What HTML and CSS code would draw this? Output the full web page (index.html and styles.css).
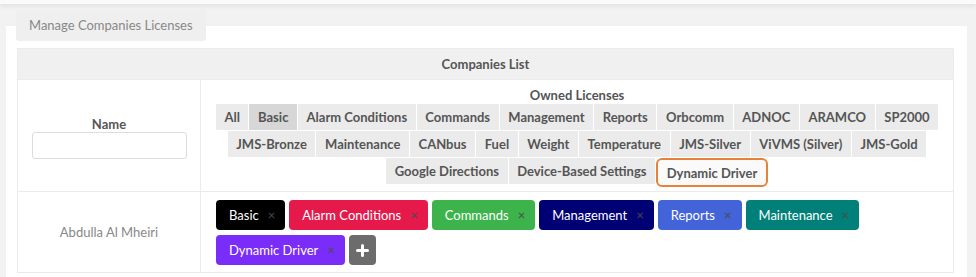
FILE: index.html
```html
<!DOCTYPE html>
<html lang="en">
<head>
    <meta charset="UTF-8">
    <meta name="viewport" content="width=device-width, initial-scale=1.0">
    <title>Manage Companies Licenses</title>
    <link rel="stylesheet" href="styles.css">
</head>
<body>
  <div class="top_bar"></div>
  <fieldset class="panel">
    <legend class="panel_title">Manage Companies Licenses</legend>
    <table class="companies">
      <colgroup>
        <col class="col_name">
        <col>
      </colgroup>
      <thead>
        <tr>
          <th colspan="2" class="list_head">Companies List</th>
        </tr>
      </thead>
      <tbody>
        <tr class="filter_row">
          <td class="name_cell">
            <div class="label">Name</div>
            <input type="text" class="name_input">
          </td>
          <td class="licenses_cell">
            <div class="label">Owned Licenses</div>
            <div class="tabs">
              <a class="tab">All</a>
              <a class="tab active">Basic</a>
              <a class="tab">Alarm Conditions</a>
              <a class="tab">Commands</a>
              <a class="tab">Management</a>
              <a class="tab">Reports</a>
              <a class="tab">Orbcomm</a>
              <a class="tab">ADNOC</a>
              <a class="tab">ARAMCO</a>
              <a class="tab">SP2000</a>
            </div>
            <div class="tabs">
              <a class="tab">JMS-Bronze</a>
              <a class="tab">Maintenance</a>
              <a class="tab">CANbus</a>
              <a class="tab">Fuel</a>
              <a class="tab">Weight</a>
              <a class="tab">Temperature</a>
              <a class="tab">JMS-Silver</a>
              <a class="tab">ViVMS (Silver)</a>
              <a class="tab">JMS-Gold</a>
            </div>
            <div class="tabs">
              <a class="tab">Google Directions</a>
              <a class="tab">Device-Based Settings</a>
              <a class="tab marked">Dynamic Driver</a>
            </div>
          </td>
        </tr>
        <tr class="company_row">
          <td class="company_name">Abdulla Al Mheiri</td>
          <td class="badges_cell">
            <div class="badges">
              <span class="badge basic">Basic<span class="remove">&times;</span></span>
              <span class="badge alarm">Alarm Conditions<span class="remove">&times;</span></span>
              <span class="badge commands">Commands<span class="remove">&times;</span></span>
              <span class="badge management">Management<span class="remove">&times;</span></span>
              <span class="badge reports">Reports<span class="remove">&times;</span></span>
              <span class="badge maintenance">Maintenance<span class="remove">&times;</span></span>
              <span class="badge driver">Dynamic Driver<span class="remove">&times;</span></span>
              <button class="add_btn">
                <svg width="13" height="13" viewBox="0 0 13 13"><path d="M6.5 1.5v10M1.5 6.5h10" stroke="#fff" stroke-width="3" stroke-linecap="round"/></svg>
              </button>
            </div>
          </td>
        </tr>
      </tbody>
    </table>
  </fieldset>
</body>
</html>
```

FILE: styles.css
```css
* {
    box-sizing: border-box;
}
body {
    margin: 0;
    background-color: #f2f2f2;
    font-family: Lato, "Open Sans", Arial, sans-serif;
    font-size: 13px;
    color: #555;
}
.top_bar {
    height: 4px;
    background-color: #fafafa;
    box-shadow: 0 2px 4px rgba(0, 0, 0, 0.08);
}
.panel {
    margin: 6px 9px 0 6px;
    padding: 7px 13px 10px 11px;
    border: 0;
    background-color: #fff;
    min-width: 0;
}
.panel_title {
    margin-left: -1px;
    padding: 0 13px;
    height: 31px;
    line-height: 31px;
    background-color: #efefef;
    border-radius: 3px;
    color: #888;
}
.companies {
    width: 100%;
    border-collapse: collapse;
    table-layout: fixed;
}
.col_name {
    width: 183px;
}
.companies th,
.companies td {
    border: 1px solid #ebebeb;
}
.list_head {
    height: 31px;
    background-color: #f0f0f0;
    font-weight: 700;
    color: #555;
}
.label {
    font-weight: 700;
    line-height: 16px;
    text-align: center;
}
.name_cell {
    text-align: center;
    vertical-align: middle;
    padding: 4px 0 0;
}
.name_input {
    display: block;
    width: 155px;
    height: 27px;
    margin: 0 auto;
    border: 1px solid #ddd;
    border-radius: 3px;
}
.licenses_cell {
    padding: 7px 6px 6px;
}
.licenses_cell .label {
    margin-bottom: 1px;
}
.tabs {
    display: flex;
    flex-wrap: wrap;
    justify-content: center;
    gap: 0 1px;
    margin-bottom: 1px;
}
.tab {
    height: 26px;
    line-height: 26px;
    padding: 0 8.6px;
    background-color: #ebebeb;
    font-weight: 700;
    color: #555;
}
.tab.active {
    background-color: #d7d7d7;
}
.tab.marked {
    height: 29px;
    line-height: 27px;
    margin-bottom: -3px;
    background-color: #fafafa;
    border: 2px solid #e8823a;
    border-radius: 6px;
}
.company_name {
    text-align: center;
    vertical-align: middle;
    color: #888;
}
.badges_cell {
    padding: 8px 15px 7px;
}
.badges {
    display: flex;
    flex-wrap: wrap;
    gap: 5px 4px;
}
.badge {
    height: 30px;
    line-height: 30px;
    padding: 0 10px 0 13px;
    border-radius: 4px;
    color: #fff;
}
.remove {
    margin-left: 9px;
    color: #4a4a4a;
}
.basic { background-color: #000; }
.alarm { background-color: #e6194b; }
.commands { background-color: #3cb44b; }
.management { background-color: #000075; }
.reports { background-color: #4363d8; }
.maintenance { background-color: #008079; }
.driver { background-color: #7a2df8; }
.add_btn {
    width: 27px;
    height: 30px;
    padding: 0;
    border: 0;
    border-radius: 4px;
    background-color: #6c6c6c;
    display: flex;
    align-items: center;
    justify-content: center;
}
```
